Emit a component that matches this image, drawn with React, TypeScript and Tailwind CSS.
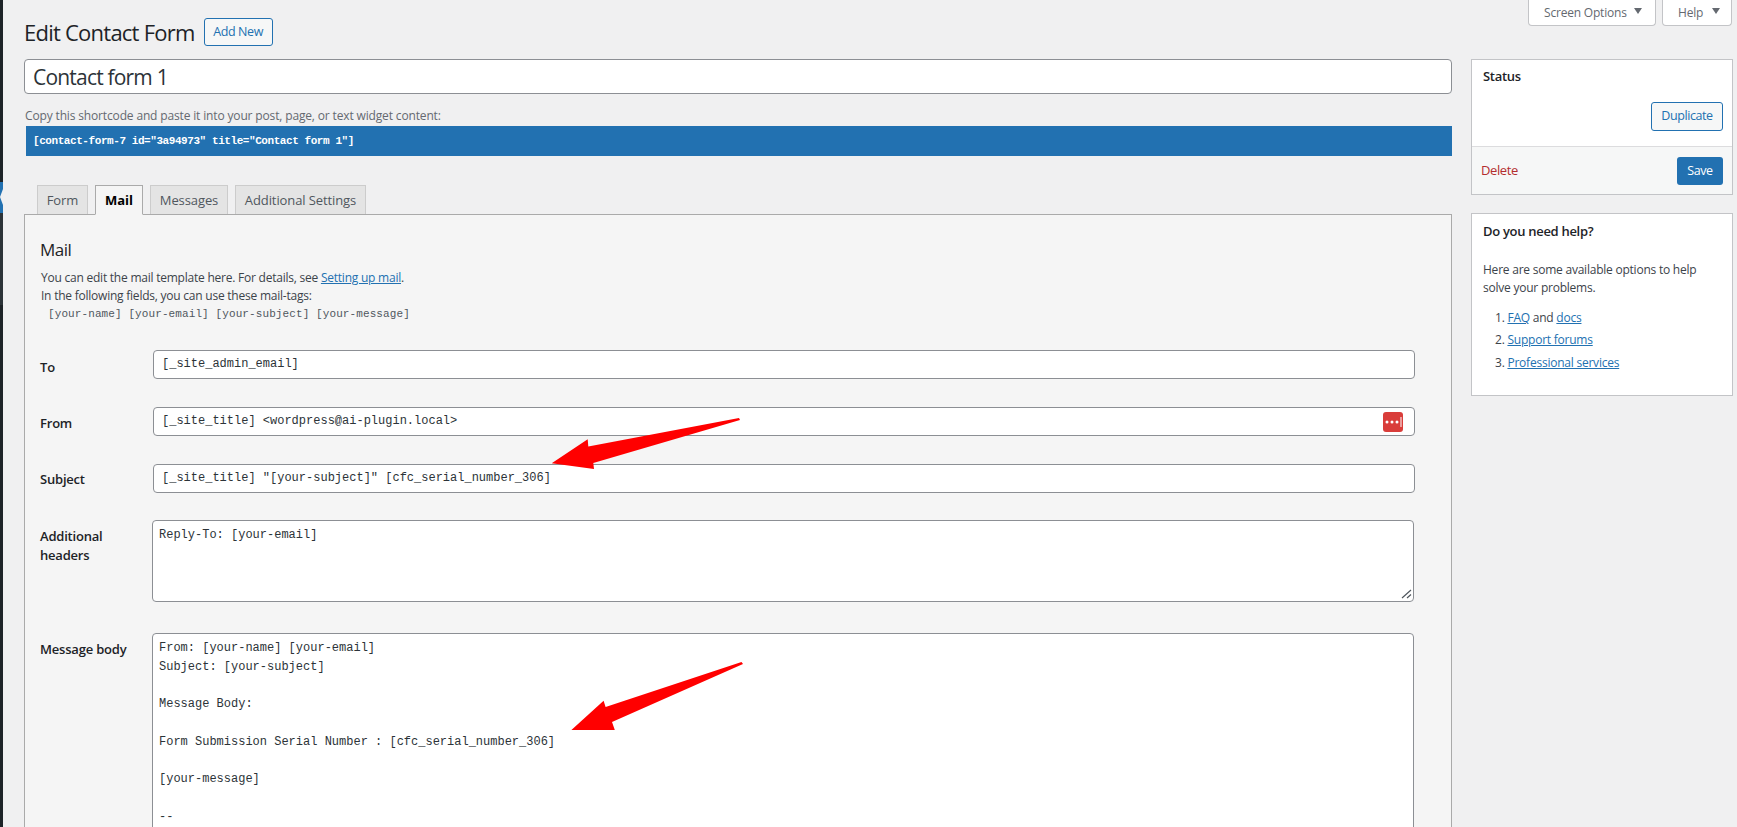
const mono = "font-['Liberation_Mono',monospace]"

const messageBody = `From: [your-name] [your-email]
Subject: [your-subject]

Message Body:

Form Submission Serial Number : [cfc_serial_number_306]

[your-message]

--`

function Field({ label, labelTop, className, children }: { label: string; labelTop: string; className?: string; children: React.ReactNode }) {
  return (
    <div className={`flex ${className ?? ''}`}>
      <div className={`w-[113px] shrink-0 text-[13px] leading-[19px] font-semibold tracking-[-0.2px] text-[#1d2327] ${labelTop}`}>{label}</div>
      {children}
    </div>
  )
}

function TextField({ value, children }: { value: string; children?: React.ReactNode }) {
  return (
    <div className={`flex h-[29px] w-[1262px] items-center justify-between rounded-[4px] border border-[#8c8f94] bg-white pr-[11px] pl-[8px] text-[12px] whitespace-pre text-[#2c3338] ${mono}`}>
      <span className="-mt-[1px]">{value}</span>
      {children}
    </div>
  )
}

function Tab({ label, width, active }: { label: string; width: string; active?: boolean }) {
  if (active) {
    return (
      <div className={`z-10 flex h-[30px] items-center justify-center border border-[#aaaaaa] border-b-[#f5f5f5] bg-[#f5f5f5] pt-[2px] text-[13px] font-bold text-black ${width}`}>
        {label}
      </div>
    )
  }
  return (
    <div className={`flex h-[29px] items-center justify-center border border-b-0 border-[#cccccc] bg-[#e4e4e4] pt-[2px] text-[13px] tracking-[-0.1px] text-[#50575e] ${width}`}>
      {label}
    </div>
  )
}

function PasswordIcon() {
  return (
    <svg width="20" height="20" viewBox="0 0 20 20" className="shrink-0">
      <rect width="20" height="20" rx="3" fill="#d93d3a" />
      <circle cx="4" cy="10" r="1.5" fill="#fff" />
      <circle cx="9" cy="10" r="1.5" fill="#fff" />
      <circle cx="14" cy="10" r="1.5" fill="#fff" />
      <rect x="17.5" y="5" width="1" height="10" fill="#fff" />
    </svg>
  )
}

function Caret() {
  return (
    <svg width="8" height="6" viewBox="0 0 8 6" className="-mt-[3px] shrink-0">
      <path d="M0 0 H8 L4 6 Z" fill="#646970" />
    </svg>
  )
}

export default function App() {
  return (
    <div className="relative flex h-[827px] w-[1737px] overflow-hidden bg-[#f0f0f1] font-['Open_Sans',sans-serif] text-[13px] text-[#3c434a]">
      {/* admin menu sliver */}
      <div className="flex w-[3px] shrink-0 flex-col">
        <div className="h-[182px] bg-[#1d2327]" />
        <div className="h-[31px] bg-[#2271b1]">
          <svg width="3" height="31" viewBox="0 0 3 31">
            <path d="M3 7 L0 15 L3 23 Z" fill="#f0f0f1" />
          </svg>
        </div>
        <div className="h-[92px] bg-[#2c3338]" />
        <div className="flex-1 bg-[#1d2327]" />
      </div>

      <div className="flex-1 pr-[4px] pl-[21px]">
        <header className="flex h-[59px] items-start justify-between">
          <div className="mt-[18px] flex items-center">
            <h1 className="text-[22px] leading-[28px] font-normal tracking-[-0.76px] text-[#1d2327]">Edit Contact Form</h1>
            <a className="ml-[9px] flex h-[28px] w-[69px] items-center justify-center rounded-[3px] border border-[#2271b1] bg-[#f6f7f7] text-[12.5px] tracking-[-0.4px] text-[#2271b1]">
              Add New
            </a>
          </div>
          <div className="flex gap-[6px] pr-[1px]">
            <div className="flex h-[26px] w-[128px] items-center rounded-b-[4px] border border-t-0 border-[#c3c4c7] bg-white pl-[15px] text-[12px] tracking-[-0.2px] text-[#646970]">
              <span>Screen Options</span>
              <span className="ml-[7px] flex">
                <Caret />
              </span>
            </div>
            <div className="flex h-[26px] w-[70px] items-center rounded-b-[4px] border border-t-0 border-[#c3c4c7] bg-white pl-[15px] text-[12px] tracking-[-0.2px] text-[#646970]">
              <span>Help</span>
              <span className="ml-[9px] flex">
                <Caret />
              </span>
            </div>
          </div>
        </header>

        <div className="flex gap-[19px]">
          <main className="w-[1428px] shrink-0">
            <div className="flex h-[35px] items-center rounded-[4px] border border-[#8c8f94] bg-white pt-[2px] pl-[8px] text-[21px] tracking-[-0.8px] text-[#2c3338]">
              Contact form 1
            </div>
            <p className="mt-[13px] ml-[1px] text-[12px] leading-[18px] tracking-[-0.15px] text-[#646970]">
              Copy this shortcode and paste it into your post, page, or text widget content:
            </p>
            <div className={`mt-[1px] ml-[2px] flex h-[30px] items-center bg-[#2271b1] pl-[7px] text-[11px] font-bold tracking-[-0.43px] text-white ${mono}`}>
              {'[contact-form-7 id="3a94973" title="Contact form 1"]'}
            </div>

            <div className="mt-[29px] flex h-[29px] items-start gap-[7px] pl-[13px]">
              <Tab label="Form" width="w-[51px]" />
              <Tab label="Mail" width="w-[48px]" active />
              <Tab label="Messages" width="w-[78px]" />
              <Tab label="Additional Settings" width="w-[131px]" />
            </div>

            <section className="h-[700px] border border-[#aaaaaa] bg-[#f5f5f5] pt-[23px] pl-[15px]">
              <h2 className="text-[17px] leading-[24px] font-normal tracking-[-0.5px] text-[#1d2327]">Mail</h2>
              <div className="mt-[7px] ml-[1px] text-[12px] leading-[18px] tracking-[-0.23px]">
                <p>
                  You can edit the mail template here. For details, see <a className="text-[#2271b1] underline">Setting up mail</a>.
                </p>
                <p>In the following fields, you can use these mail-tags:</p>
                <p className={`ml-[7px] text-[11px] tracking-[0.1px] text-[#50575e] ${mono}`}>[your-name] [your-email] [your-subject] [your-message]</p>
              </div>

              <Field label="To" labelTop="pt-[8px]" className="mt-[27px]">
                <TextField value="[_site_admin_email]" />
              </Field>
              <Field label="From" labelTop="pt-[7px]" className="mt-[28px]">
                <TextField value="[_site_title] <wordpress@ai-plugin.local>">
                  <PasswordIcon />
                </TextField>
              </Field>
              <Field label="Subject" labelTop="pt-[6px]" className="mt-[28px]">
                <TextField value={'[_site_title] "[your-subject]" [cfc_serial_number_306]'} />
              </Field>
              <Field label="Additional headers" labelTop="w-[80px] pt-[7px]" className="mt-[27px]">
                <div className={`relative -ml-[1px] h-[82px] w-[1262px] rounded-[4px] border border-[#8c8f94] bg-white pt-[5px] pl-[6px] text-[12px] leading-[18.75px] text-[#2c3338] ${mono}`}>
                  Reply-To: [your-email]
                  <svg width="11" height="10" viewBox="0 0 11 10" className="absolute right-[1px] bottom-[2px]" stroke="#50575e" strokeWidth="1.2" fill="none">
                    <path d="M1 9 L10 1 M6 9 L10 5.5" />
                  </svg>
                </div>
              </Field>
              <Field label="Message body" labelTop="pt-[7px]" className="mt-[31px]">
                <div className={`-ml-[1px] h-[400px] w-[1262px] rounded-[4px] border border-[#8c8f94] bg-white pt-[5px] pl-[6px] text-[12px] leading-[18.75px] whitespace-pre text-[#2c3338] ${mono}`}>
                  {messageBody}
                </div>
              </Field>
            </section>
          </main>

          <aside className="w-[262px] shrink-0">
            <div className="h-[136px] border border-[#c3c4c7] bg-white">
              <h3 className="pt-[7px] pl-[11px] text-[13px] leading-[19px] font-semibold tracking-[-0.3px] text-[#1d2327]">Status</h3>
              <div className="mt-[16px] flex justify-end pr-[9px]">
                <a className="flex h-[29px] w-[72px] items-center justify-center rounded-[3px] border border-[#2271b1] bg-[#f6f7f7] text-[12.5px] tracking-[-0.4px] text-[#2271b1]">
                  Duplicate
                </a>
              </div>
              <div className="mt-[15px] flex h-[48px] items-center justify-between border-t border-[#dcdcde] bg-[#f6f7f7] pr-[9px] pl-[9px]">
                <a className="tracking-[-0.4px] text-[#b32d2e]">Delete</a>
                <a className="flex h-[28px] w-[46px] items-center justify-center rounded-[3px] bg-[#2271b1] pt-[1px] text-[12.5px] tracking-[-0.4px] text-white">Save</a>
              </div>
            </div>

            <div className="mt-[18px] h-[183px] border border-[#c3c4c7] bg-white pl-[11px]">
              <h3 className="pt-[8px] text-[13px] leading-[19px] font-semibold tracking-[-0.3px] text-[#1d2327]">Do you need help?</h3>
              <p className="mt-[20px] w-[225px] text-[12px] leading-[18px] tracking-[-0.23px]">Here are some available options to help solve your problems.</p>
              <ol className="mt-[12px] ml-[12px] text-[12px] leading-[18px] tracking-[-0.23px]">
                <li>
                  1. <a className="text-[#2271b1] underline">FAQ</a> and <a className="text-[#2271b1] underline">docs</a>
                </li>
                <li className="mt-[4px]">
                  2. <a className="text-[#2271b1] underline">Support forums</a>
                </li>
                <li className="mt-[5px]">
                  3. <a className="text-[#2271b1] underline">Professional services</a>
                </li>
              </ol>
            </div>
          </aside>
        </div>
      </div>

      {/* red annotation arrows drawn over the screenshot */}
      <svg width="1737" height="827" viewBox="0 0 1737 827" className="pointer-events-none absolute top-0 left-0">
        <path d="M739 418 L740 420 L593.3 463 L594 469 L551.7 463.3 L587.7 439.3 L588.3 446.5 Z" fill="#ff0000" />
        <path d="M741.5 662 L743 664 L612 722 L614.8 730 L571.4 730 L603.6 700.7 L605.6 707 Z" fill="#ff0000" />
      </svg>
    </div>
  )
}
